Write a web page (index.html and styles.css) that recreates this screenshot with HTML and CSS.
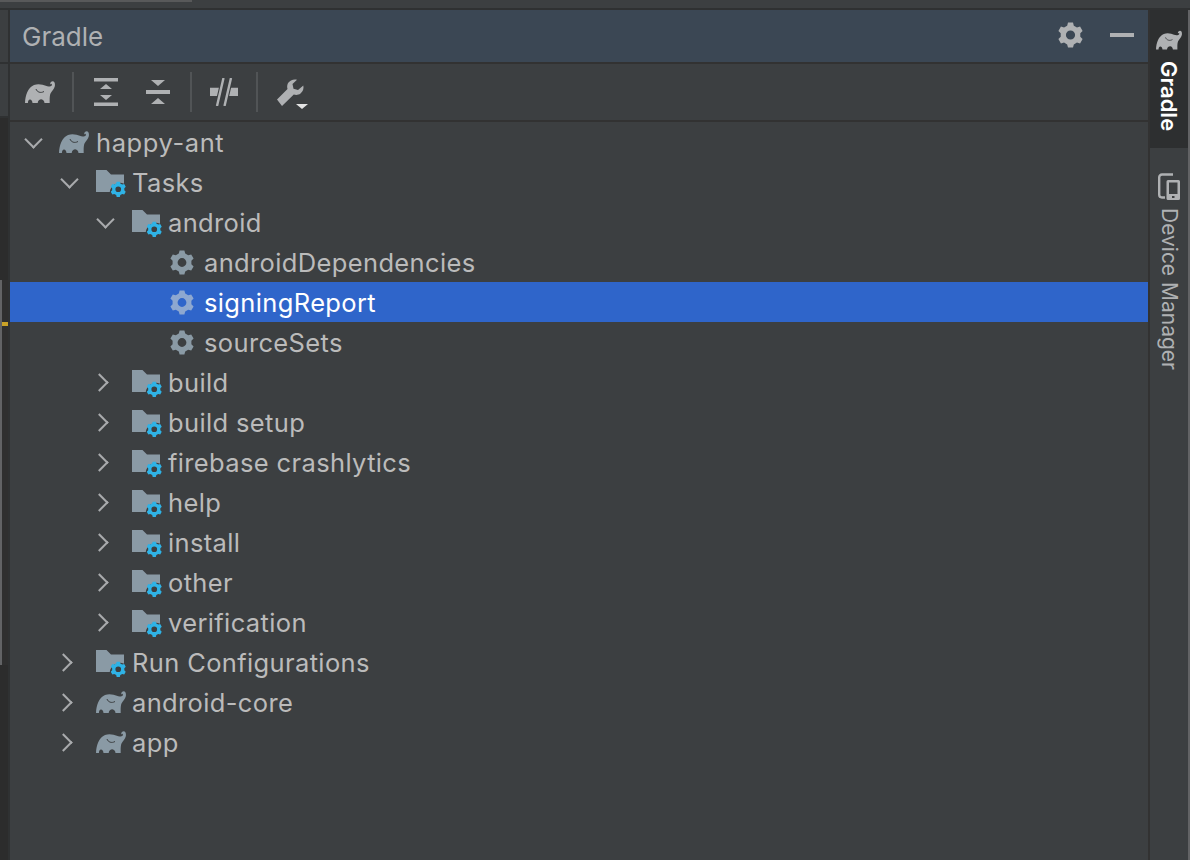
FILE: index.html
```html
<!DOCTYPE html>
<html lang="en">
<head>
<meta charset="utf-8">
<title>Gradle</title>
<link rel="stylesheet" href="styles.css">
</head>
<body>
<svg class="defs" width="0" height="0" aria-hidden="true">
  <defs>
    <symbol id="ele" viewBox="0 0 30 22">
      <path fill="currentColor" d="M0 22C.3 14 3 6.500 9 4C12 2.800 15 3 17.500 3.800C20.500 4.800 23 6 25.500 5.200C27 4.700 27.300 3.200 26.300 2.800L25.300 3.400C24.900 1.800 26.300 .3 27.700 .3C29.500 .3 30.300 2.600 29.800 5.200C29.200 8.300 26.800 10 25.500 12.500C24.600 14.500 24.600 18.500 24.700 22L19.500 22C19.300 20 18.200 18.500 16.300 18.300C14.500 18.300 13 19.500 12.700 22L7.500 22C7.300 20 6.300 18.500 5 18.500C3.700 18.500 3 20 2.900 22Z"/>
      <path d="M11 8C12 11 15.500 12.500 19 10.500" fill="none" stroke="#3c3f41" stroke-width="1"/>
    </symbol>
    <symbol id="gear" viewBox="0 0 24 24">
      <path fill-rule="evenodd" fill="currentColor" d="M8.800 3 9.600 0h4.800l.8 3 3 1.730 3-.81 2.400 4.160-2.200 2.190v3.460l2.200 2.190-2.400 4.160-3-.81-3 1.730-.8 3H9.600l-.8-3-3-1.730-3 .81-2.400-4.160 2.200-2.190v-3.460L.41 8.080l2.400-4.160 3 .81zM12 7.600a4.400 4.400 0 1 0 0 8.800 4.400 4.400 0 0 0 0-8.800z"/>
    </symbol>
    <symbol id="taskfolder" viewBox="0 0 30 30">
      <path d="M0 3h10.500l4.500 4.500H28v9.200A10.200 10.200 0 0 0 13.800 25H0z" fill="#8a9aa5"/>
      <svg x="14.500" y="14.500" width="15.500" height="15.500" viewBox="0 0 24 24" color="#2fb3e6"><use href="#gear"/></svg>
    </symbol>
  </defs>
</svg>
<div class="topstrip"><span class="topbar"></span></div>
<div class="frame">
  <aside class="leftedge">
    <div class="le-a"></div>
    <div class="le-b"></div>
    <div class="le-c"></div>
    <div class="le-d"><span class="mark"></span></div>
    <div class="le-e"></div>
  </aside>
  <main class="panel">
    <header class="titlebar">
      <h1 class="title">Gradle</h1>
      <div class="titleactions">
        <svg class="i-gear" aria-hidden="true"><use href="#gear"/></svg>
        <span class="minimize"></span>
      </div>
    </header>
    <div class="toolbar">
      <svg class="tb-ele" aria-hidden="true"><use href="#ele"/></svg>
      <span class="sep sep1"></span>
      <svg class="tb" viewBox="0 0 24 28" aria-hidden="true"><path fill="currentColor" d="M0 0h24v3.500H0zM0 24.500h24V28H0zM12 6l6 5H6zM6 17h12l-6 5z"/></svg>
      <svg class="tb tb2" viewBox="0 0 24 28" aria-hidden="true"><path fill="currentColor" d="M0 12h24v4H0zM5 2h14l-7 6zM12 20l7 6H5z"/></svg>
      <span class="sep sep2"></span>
      <svg class="tb tb3" viewBox="0 0 28 28" aria-hidden="true"><path fill="currentColor" d="M0 9.700h9v8.300H0zM19 9.700h9V18h-9z"/><path stroke="#3c3f41" stroke-width="4.600" d="M13.500 0 7 28M21 0l-6.500 28" fill="none"/><path stroke="currentColor" stroke-width="2.400" d="M13.500 0 7 28M21 0l-6.500 28" fill="none"/></svg>
      <span class="sep sep3"></span>
      <svg class="tb tb4" viewBox="0 0 32 30" aria-hidden="true"><path fill="currentColor" d="M0 20.500 10.500 10C9.500 6 11 3 14 1.500 16 .5 18 .3 20 .8L15.500 5l1 4.800L21 11l5.300-4.500c.7 3-.3 6-2.800 8-2 1.500-4.500 1.800-6.700 1L5 27z"/><path fill="#e4e4e4" d="M19 25h12l-6 5z"/></svg>
    </div>
    <ul class="tree">
      <li class="row d0 open"><span class="chev"></span><svg class="ic ele" aria-hidden="true"><use href="#ele"/></svg><span class="lbl lbl-root">happy-ant</span></li>
      <li class="row d1 open"><span class="chev"></span><svg class="ic" aria-hidden="true"><use href="#taskfolder"/></svg><span class="lbl">Tasks</span></li>
      <li class="row d2 open"><span class="chev"></span><svg class="ic" aria-hidden="true"><use href="#taskfolder"/></svg><span class="lbl">android</span></li>
      <li class="row d3"><svg class="ic-gear" aria-hidden="true"><use href="#gear"/></svg><span class="lbl">androidDependencies</span></li>
      <li class="row d3 sel"><svg class="ic-gear" aria-hidden="true"><use href="#gear"/></svg><span class="lbl">signingReport</span></li>
      <li class="row d3"><svg class="ic-gear" aria-hidden="true"><use href="#gear"/></svg><span class="lbl">sourceSets</span></li>
      <li class="row d2"><span class="chev"></span><svg class="ic" aria-hidden="true"><use href="#taskfolder"/></svg><span class="lbl">build</span></li>
      <li class="row d2"><span class="chev"></span><svg class="ic" aria-hidden="true"><use href="#taskfolder"/></svg><span class="lbl">build setup</span></li>
      <li class="row d2"><span class="chev"></span><svg class="ic" aria-hidden="true"><use href="#taskfolder"/></svg><span class="lbl">firebase crashlytics</span></li>
      <li class="row d2"><span class="chev"></span><svg class="ic" aria-hidden="true"><use href="#taskfolder"/></svg><span class="lbl">help</span></li>
      <li class="row d2"><span class="chev"></span><svg class="ic" aria-hidden="true"><use href="#taskfolder"/></svg><span class="lbl">install</span></li>
      <li class="row d2"><span class="chev"></span><svg class="ic" aria-hidden="true"><use href="#taskfolder"/></svg><span class="lbl">other</span></li>
      <li class="row d2"><span class="chev"></span><svg class="ic" aria-hidden="true"><use href="#taskfolder"/></svg><span class="lbl">verification</span></li>
      <li class="row d1"><span class="chev"></span><svg class="ic" aria-hidden="true"><use href="#taskfolder"/></svg><span class="lbl">Run Configurations</span></li>
      <li class="row d1"><span class="chev"></span><svg class="ic ele" aria-hidden="true"><use href="#ele"/></svg><span class="lbl">android-core</span></li>
      <li class="row d1"><span class="chev"></span><svg class="ic ele" aria-hidden="true"><use href="#ele"/></svg><span class="lbl">app</span></li>
    </ul>
  </main>
  <nav class="rail">
    <div class="tab active"><svg class="tab-ele" aria-hidden="true"><use href="#ele"/></svg><span class="tablbl">Gradle</span></div>
    <div class="tab tab-two"><svg class="tab-dev" viewBox="0 0 22 27" aria-hidden="true"><path fill="none" stroke="currentColor" stroke-width="2.400" d="M15 1.500H4A2.800 2.800 0 0 0 1.200 4.300v17.500A2.800 2.800 0 0 0 4 24.500h3"/><path fill-rule="evenodd" fill="currentColor" d="M10 7h10.500A1.500 1.500 0 0 1 22 8.500V25.500a1.500 1.500 0 0 1-1.500 1.500H10a1.500 1.500 0 0 1-1.500-1.500V8.500A1.500 1.500 0 0 1 10 7zm1 2.500V21h8.500V9.500zM14 23v2h2.500v-2z"/></svg><span class="tablbl">Device Manager</span></div>
  </nav>
</div>
</body>
</html>
```

FILE: styles.css
```css
* { box-sizing: border-box; }
html, body { margin: 0; padding: 0; height: 100%; overflow: hidden; background: #3c3f41; }
body { font-family: Inter, "Liberation Sans", sans-serif; color: #bbbbbb; }
.defs { position: absolute; }
.topstrip { height: 10px; background: #3c3f41; border-bottom: 2px solid #2f3132; }
.topbar { display: block; width: 192px; height: 2px; background: #58595a; }
.frame { display: flex; height: 850px; }
.leftedge { width: 10px; border-right: 2px solid #2f3132; display: flex; flex-direction: column; flex: none; }
.le-a { height: 54px; background: #3c3f41; border-bottom: 2px solid #2f3132; }
.le-b { height: 54px; background: #3c3f41; border-bottom: 2px solid #2f3132; }
.le-c { height: 162px; background: #2c2c2c; }
.le-d { height: 385px; background: #2f2f2f; border-left: 2px solid #626365; padding-top: 42px; }
.le-e { flex: 1; background: #2c2c2c; }
.mark { display: block; width: 6px; height: 4px; background: #c9a227; }
.panel { width: 1138px; display: flex; flex-direction: column; flex: none; }
.titlebar { height: 54px; background: #3b4754; border-bottom: 2px solid #323232; display: flex; align-items: center; justify-content: space-between; padding: 0 14px 2px 12px; flex: none; }
.title { margin: 0; padding-top: 3px; font-size: 26px; font-weight: 400; color: #afb1b3; }
.titleactions { display: flex; align-items: center; gap: 27px; }
.i-gear { width: 25px; height: 26px; color: #afb1b3; }
.minimize { width: 24px; height: 4px; background: #afb1b3; }
.toolbar { height: 58px; border-bottom: 2px solid #323232; display: flex; align-items: center; padding-left: 15px; color: #afb1b3; flex: none; }
.tb-ele { width: 30px; height: 22px; }
.sep { width: 2px; height: 40px; background: #515456; }
.sep1 { margin: 0 20px 0 17px; }
.sep2 { margin: 0 18px 0 20px; }
.sep3 { margin: 0 19px 0 18px; }
.tb { width: 24px; height: 28px; }
.tb2 { margin-left: 28px; }
.tb3 { width: 28px; }
.tb4 { width: 32px; height: 30px; margin-top: 3px; }
.tree { list-style: none; margin: 0; padding: 0; }
.row { height: 40px; display: flex; align-items: center; font-size: 25.500px; letter-spacing: .36px; position: relative; }
.d0 { padding-left: 48px; }
.d1 { padding-left: 85px; }
.d2 { padding-left: 121px; }
.d3 { padding-left: 160px; }
.chev { position: absolute; width: 13px; height: 13px; border-right: 2.500px solid #a9abad; border-bottom: 2.500px solid #a9abad; transform: rotate(-45deg); }
.d1 .chev { left: 47px; }
.d2 .chev { left: 83px; }
.open .chev { transform: translateY(-3px) rotate(45deg); }
.d0.open .chev { left: 17px; }
.d1.open .chev { left: 53px; }
.d2.open .chev { left: 89px; }
.ic { width: 30px; height: 30px; margin-left: 1px; flex: none; }
.ele { color: #8a9aa5; height: 22px; }
.ic-gear { width: 24px; height: 25px; color: #8a9aa5; flex: none; }
.lbl { margin-left: 6px; white-space: nowrap; }
.lbl-root { margin-left: 7px; letter-spacing: .6px; }
.d3 .lbl { margin-left: 10px; }
.sel { background: #2f65ca; color: #ffffff; }
.sel .ic-gear { color: #8ea8d0; }
.rail { width: 42px; background: #3c3f41; border-left: 2px solid #323232; border-right: 2px solid #626365; flex: none; }
.tab { display: flex; flex-direction: column; align-items: center; padding-top: 20px; color: #afb1b3; }
.tab.active { background: #2d2f30; color: #fff; height: 138px; }
.tab-two { padding-top: 25px; }
.tab-ele { width: 26px; height: 20px; color: #afb1b3; }
.tab-dev { width: 22px; height: 27px; }
.tablbl { writing-mode: vertical-rl; font-size: 21px; margin-top: 8px; white-space: nowrap; }
.active .tablbl { font-weight: 600; font-size: 22px; margin-top: 11px; }
```
